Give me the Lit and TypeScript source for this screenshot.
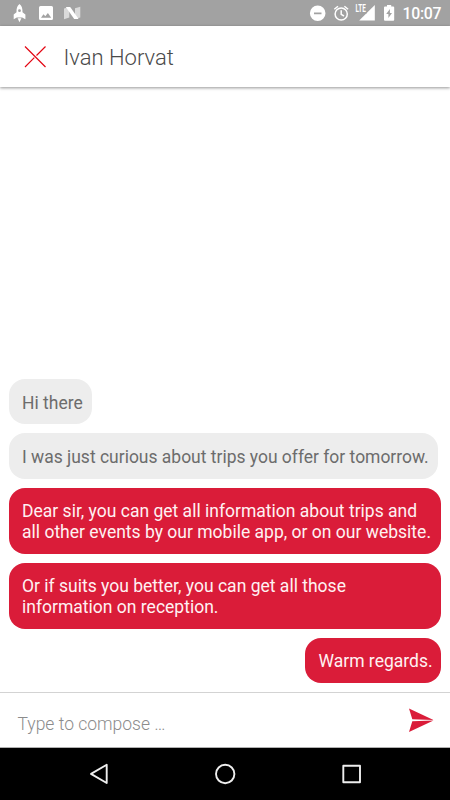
import { LitElement, html, css } from "lit";
import { customElement } from "lit/decorators.js";
import { classMap } from "lit/directives/class-map.js";

interface Message {
  lines: string[];
  mine: boolean;
  wide?: boolean;
}

const MESSAGES: Message[] = [
  { lines: ["Hi there"], mine: false },
  { lines: ["I was just curious about trips you offer for tomorrow."], mine: false },
  {
    lines: [
      "Dear sir, you can get all information about trips and",
      "all other events by our mobile app, or on our website.",
    ],
    mine: true,
    wide: true,
  },
  {
    lines: ["Or if suits you better, you can get all those", "information on reception."],
    mine: true,
    wide: true,
  },
  { lines: ["Warm regards."], mine: true },
];

@customElement("status-bar")
class StatusBar extends LitElement {
  static styles = css`
    :host {
      display: block;
      height: 26px;
      background: #a2a2a2;
    }
    svg {
      display: block;
      flex: none;
    }
    .bar {
      display: flex;
      justify-content: space-between;
      height: 26px;
    }
    .right {
      display: flex;
    }
    .clock {
      width: 47.500px;
      font-size: 15.800px;
      line-height: 28px;
      letter-spacing: -0.250px;
      font-weight: 500;
      color: #fff;
      white-space: nowrap;
    }
  `;

  render() {
    return html`<div class="bar">
      <svg width="90" height="26" viewBox="0 0 90 26" fill="#fff">
        <path
          fill-rule="evenodd"
          d="M19.500 4C17.200 5.600 16.400 8.200 16.500 12.200L13.700 14.600V19.200L16.800 17.600H22.200L25.400 19.200V14.600L22.500 12.200C22.600 8.200 21.800 5.600 19.500 4ZM19.500 9.300A1.400 1.400 0 1 1 19.500 12.100A1.400 1.400 0 1 1 19.500 9.300Z"
        />
        <path d="M17.600 18.300H21.400L19.500 22.300Z" />
        <path
          fill-rule="evenodd"
          d="M40.500 6H51.500Q53 6 53 7.500V18.500Q53 20 51.500 20H40.500Q39 20 39 18.500V7.500Q39 6 40.500 6ZM41 17.700H51.200L47.900 13L45.300 16.200L43.500 14.200Z"
        />
        <path fill="#dadada" d="M64 8.500L69.300 7V17.500L64 19.300ZM75 8.300L80.300 6.800V17.600L75 19.100Z" />
        <path d="M65.800 7H70.200L78.600 19H74.200Z" />
      </svg>
      <div class="right">
        <svg width="102.500" height="26" viewBox="300 0 102.500 26" fill="#fff">
          <path
            fill-rule="evenodd"
            d="M317.700 5.400A7.800 7.800 0 1 1 317.700 21A7.800 7.800 0 1 1 317.700 5.400ZM314 12.400V14.200H321.500V12.400Z"
          />
          <g fill="none" stroke="#fff" stroke-width="1.500">
            <circle cx="341.200" cy="14" r="6.100" />
            <path d="M334.300 9.300L338 6.200M348.100 9.300L344.400 6.200M341.200 10.300V14.300L344 16" />
          </g>
          <path d="M374.800 5V20.600H359.200Z" />
          <path
            fill-rule="evenodd"
            d="M387 5H391.200V6.500H393.200Q394.200 6.500 394.200 7.500V19.700Q394.200 20.700 393.200 20.700H385Q384 20.700 384 19.700V7.500Q384 6.500 385 6.500H387ZM389.900 9L386.200 14.100H388.400V18L392 12.900H389.900Z"
          />
          <rect x="354.500" y="4" width="12.200" height="9.500" fill="#a2a2a2" />
          <text
            x="355.500"
            y="12.200"
            font-family="Roboto, sans-serif"
            font-size="10"
            font-weight="700"
            textLength="10.300"
            lengthAdjust="spacingAndGlyphs"
          >LTE</text>
        </svg>
        <div class="clock">10:07</div>
      </div>
    </div>`;
  }
}

@customElement("message-bubble")
class MessageBubble extends LitElement {
  static properties = { message: { attribute: false } };
  declare message: Message;

  static styles = css`
    :host {
      display: flex;
    }
    .bubble {
      box-sizing: border-box;
      padding: 13.500px 9px 11px 13px;
      border-radius: 16px;
      background: #ededed;
      color: #6c6c6c;
      font-size: 17.480px;
      line-height: 20.700px;
      white-space: nowrap;
    }
    .single {
      padding: 14px 9px 10.700px 13px;
    }
    .mine {
      margin-left: auto;
      background: #da1c39;
      color: #fff1f2;
      font-size: 17.530px;
    }
    .mine.single {
      padding: 13.400px 8.400px 11.300px 13px;
    }
    .wide {
      width: 432px;
    }
  `;

  render() {
    const { lines, mine, wide } = this.message;
    const classes = { bubble: true, mine, wide: !!wide, single: lines.length === 1 };
    return html`<div class=${classMap(classes)}>
      ${lines.map((line) => html`<div>${line}</div>`)}
    </div>`;
  }
}

@customElement("app-root")
class AppRoot extends LitElement {
  static styles = css`
    :host {
      display: flex;
      flex-direction: column;
      width: 450px;
      height: 800px;
      overflow: hidden;
      background: #fff;
      font-family: Roboto, sans-serif;
    }
    svg {
      display: block;
    }
    header {
      display: flex;
      align-items: center;
      gap: 15.500px;
      height: 61px;
      padding-left: 24px;
      box-shadow: 0 1px 3px rgba(0, 0, 0, 0.42);
    }
    h1 {
      margin: 3px 0 0;
      font-size: 22px;
      line-height: 28px;
      font-weight: 300;
      color: #4a4a4a;
    }
    main {
      flex: 1;
      display: flex;
      flex-direction: column;
      justify-content: flex-end;
      gap: 9px;
      padding: 0 9px 9px;
    }
    .composer {
      box-sizing: border-box;
      display: flex;
      justify-content: space-between;
      height: 56px;
      padding: 0 16px 0 17.500px;
      border-top: 1px solid #d3d3d3;
      border-bottom: 1px solid #b0b0b0;
    }
    .placeholder {
      padding-top: 20.500px;
      font-size: 17.500px;
      line-height: 21px;
      font-weight: 300;
      color: #8c8c8c;
    }
    .send {
      margin-top: 15px;
    }
    nav {
      height: 52px;
      background: #000;
    }
  `;

  render() {
    return html`
      <status-bar></status-bar>
      <header>
        <svg width="24" height="24" viewBox="0 0 24 24" stroke="#e30613" stroke-width="1.200">
          <path d="M1 1.500L21.500 22M21.500 1.500L12.500 10.500M10.300 12.700L1 22" />
        </svg>
        <h1>Ivan Horvat</h1>
      </header>
      <main>
        ${MESSAGES.map((m) => html`<message-bubble .message=${m}></message-bubble>`)}
      </main>
      <div class="composer">
        <div class="placeholder">Type to compose …</div>
        <svg class="send" width="26" height="25" viewBox="0 0 26 25" fill="#da1c39">
          <path d="M1 0.500L25.500 12L4.300 11.200ZM1 24L25.500 12.500L4.300 13.200Z" />
        </svg>
      </div>
      <nav>
        <svg width="450" height="52" viewBox="0 748 450 52" fill="none" stroke="#eee" stroke-width="1.900" stroke-linejoin="round">
          <path d="M106.700 764.800V783L91 773.900Z" />
          <circle cx="225.200" cy="774" r="9.200" />
          <rect x="343.300" y="765.800" width="16.700" height="16.400" />
        </svg>
      </nav>
    `;
  }
}
